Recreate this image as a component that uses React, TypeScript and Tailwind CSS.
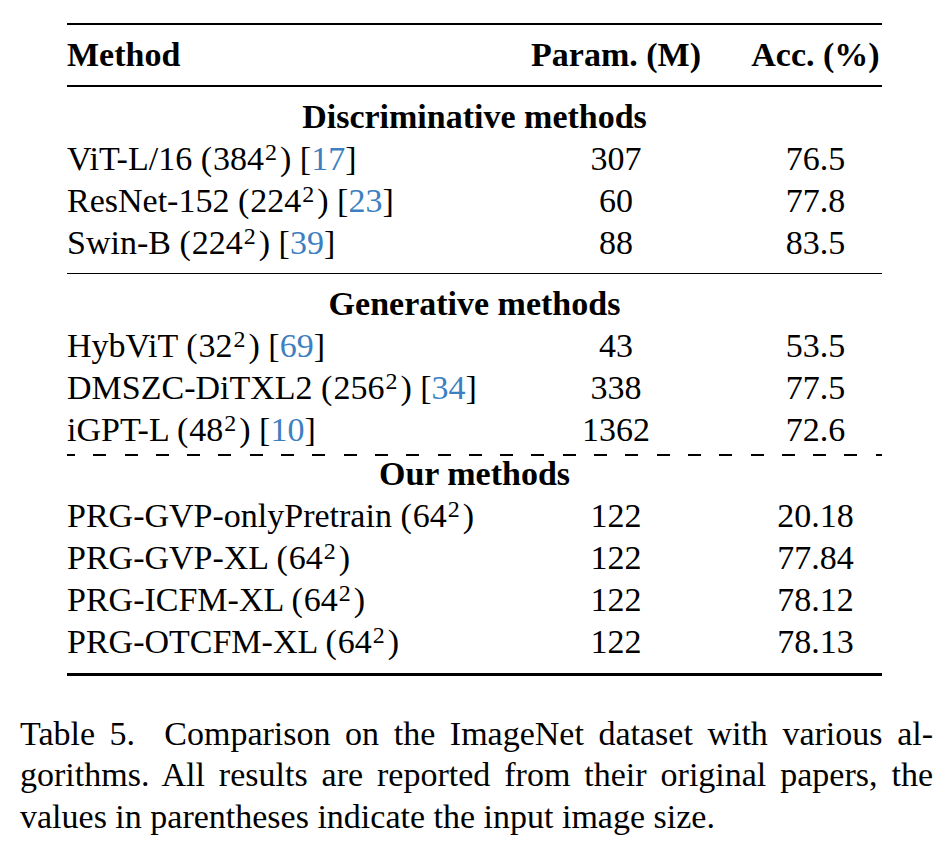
import type { ReactNode } from "react";

/**
 * Table 5 — ImageNet 비교 표 + 캡션 (LaTeX booktabs 스타일 재현).
 */

type Row = {
  name: string;
  size: string;
  cite?: string;
  params: string;
  acc: string;
};

const DISCRIMINATIVE: Row[] = [
  { name: "ViT-L/16", size: "384", cite: "17", params: "307", acc: "76.5" },
  { name: "ResNet-152", size: "224", cite: "23", params: "60", acc: "77.8" },
  { name: "Swin-B", size: "224", cite: "39", params: "88", acc: "83.5" },
];

const GENERATIVE: Row[] = [
  { name: "HybViT", size: "32", cite: "69", params: "43", acc: "53.5" },
  { name: "DMSZC-DiTXL2", size: "256", cite: "34", params: "338", acc: "77.5" },
  { name: "iGPT-L", size: "48", cite: "10", params: "1362", acc: "72.6" },
];

const OURS: Row[] = [
  { name: "PRG-GVP-onlyPretrain", size: "64", params: "122", acc: "20.18" },
  { name: "PRG-GVP-XL", size: "64", params: "122", acc: "77.84" },
  { name: "PRG-ICFM-XL", size: "64", params: "122", acc: "78.12" },
  { name: "PRG-OTCFM-XL", size: "64", params: "122", acc: "78.13" },
];

const GRID = "grid grid-cols-[439px_220px_156px] h-[42px] leading-[42px] whitespace-nowrap";

function Line({ children, className }: { children?: ReactNode; className: string }) {
  return <div className={className}>{children}</div>;
}

function SectionTitle({ title, className = "" }: { title: string; className?: string }) {
  return (
    <div className={`h-[42px] leading-[42px] text-center font-bold ${className}`}>{title}</div>
  );
}

function DataRow({ row }: { row: Row }) {
  return (
    <div className={GRID}>
      <div>
        {row.name} <span className="mr-[1px]">(</span>
        {row.size}
        <span className="text-[24px] leading-none align-[10px] ml-[1px] mr-[2px]">2</span>
        <span className="ml-[1px]">)</span>
        {row.cite && (
          <>
            {" "}[<span className="text-[#3d7fc1]">{row.cite}</span>]
          </>
        )}
      </div>
      <div className="text-center">{row.params}</div>
      <div className="text-center pl-[23px]">{row.acc}</div>
    </div>
  );
}

export default function App() {
  return (
    <div className="w-[950px] h-[856px] bg-white text-black pt-[22.5px] font-['Liberation_Serif','Times_New_Roman',serif] text-[34px]">
      <div className="ml-[67px] w-[815px]">
        <Line className="h-[2.5px] bg-black" />

        <div className={`${GRID} mt-[8.5px] font-bold`}>
          <div>Method</div>
          <div className="text-center">Param. (M)</div>
          <div className="text-center pl-[23px]">Acc. (%)</div>
        </div>
        <Line className="mt-[9.5px] h-[1.5px] bg-black" />

        <SectionTitle title="Discriminative methods" className="mt-[9px]" />
        {DISCRIMINATIVE.map((r) => (
          <DataRow key={r.name} row={r} />
        ))}
        <Line className="mt-[9px] h-[1.5px] bg-black" />

        <SectionTitle title="Generative methods" className="mt-[9px]" />
        {GENERATIVE.map((r) => (
          <DataRow key={r.name} row={r} />
        ))}
        {/* \hdashline — 자리 차지 거의 없음 */}
        <Line className="mt-[3px] h-[1.5px] bg-[repeating-linear-gradient(to_right,#000_0px,#000_8px,transparent_8px,transparent_26.3px,#000_26.3px,#000_31.3px)]" />

        <SectionTitle title="Our methods" className="-mt-[2.5px]" />
        {OURS.map((r) => (
          <DataRow key={r.name} row={r} />
        ))}
        <Line className="mt-[10px] h-[2.5px] bg-black" />
      </div>

      <div className="mt-[37px] ml-[20px] w-[913px] leading-[41.5px]">
        <p className="text-justify [text-align-last:justify]">
          Table 5.&nbsp; Comparison on the ImageNet dataset with various al-
        </p>
        <p className="text-justify [text-align-last:justify]">
          gorithms. All results are reported from their original papers, the
        </p>
        <p>values in parentheses indicate the input image size.</p>
      </div>
    </div>
  );
}
